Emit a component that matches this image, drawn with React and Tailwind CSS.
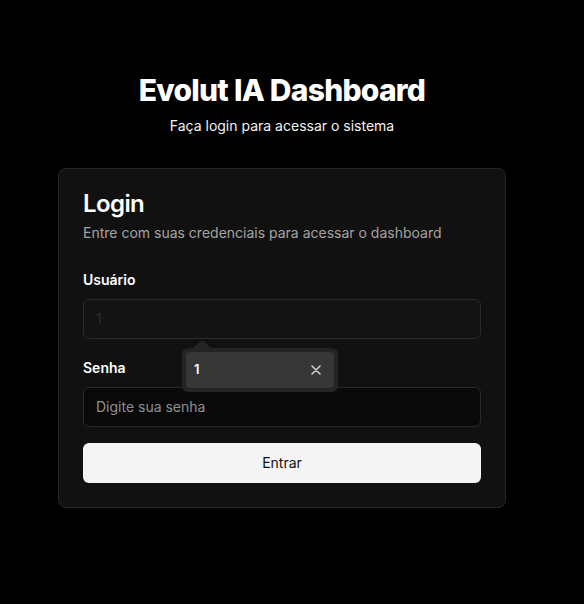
export default function App() {
  return (
    <div
      className="min-h-screen bg-black text-white flex flex-col items-center pt-[72px] pr-5"
      style={{ fontFamily: "Inter, 'Noto Sans', sans-serif" }}
    >
      {/* Header */}
      <h1 className="text-[30px] leading-9 font-extrabold tracking-tight">Evolut IA Dashboard</h1>
      <p className="mt-[8px] text-sm text-[#f2f2f2]">Faça login para acessar o sistema</p>

      {/* Card */}
      <div className="mt-[32px] w-[448px] rounded-lg border border-[#262626] bg-[#111111] px-6 pt-[19px] pb-6">
        <h2 className="text-2xl font-semibold tracking-tight leading-8">Login</h2>
        <p className="mt-[3px] text-sm text-[#a3a3a3]">Entre com suas credenciais para acessar o dashboard</p>

        <div className="mt-[27px] relative">
          <label className="block text-sm font-semibold leading-5">Usuário</label>
          <div className="mt-[9px] h-10 rounded-md border border-[#2a2a2a] bg-[#131313] px-3 flex items-center text-sm text-[#2e2e2e]">
            1
          </div>

          {/* Autocomplete popup */}
          <div className="absolute left-[99px] top-[78px] z-10">
            <div className="absolute left-[11px] -top-[8px] w-0 h-0 border-l-[9px] border-r-[9px] border-b-[8px] border-l-transparent border-r-transparent border-b-[#242424]" />
            <div className="w-[156px] rounded-md bg-[#242424] p-[4px]">
              <div className="h-[36px] rounded bg-[#363636] flex items-center justify-between pl-[8px] pr-[13px]">
                <span className="text-[13px] font-semibold text-white">1</span>
                <svg width="10" height="10" viewBox="0 0 10 10" className="text-[#cfcfcf]">
                  <path d="M1 1 L9 9 M9 1 L1 9" stroke="currentColor" strokeWidth="1.6" strokeLinecap="round" />
                </svg>
              </div>
            </div>
          </div>
        </div>

        <div className="mt-[19px]">
          <label className="block text-sm font-semibold leading-5">Senha</label>
          <div className="mt-[9px] h-10 rounded-md border border-[#2a2a2a] bg-[#090909] px-3 flex items-center text-sm text-[#8f8f8f]">
            Digite sua senha
          </div>
        </div>

        <button className="mt-4 h-10 w-full rounded-md bg-[#f4f4f4] text-sm text-[#111] font-normal">
          Entrar
        </button>
      </div>
    </div>
  );
}
